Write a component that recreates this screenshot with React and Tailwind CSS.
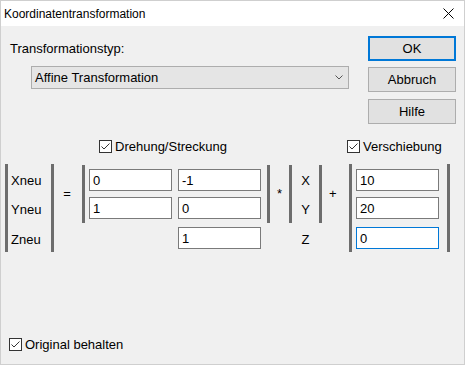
import React from "react";

// Dialog "Koordinatentransformation" im Windows-Stil

const Bar = ({ tall = false }) => (
  <div className={`w-[3px] bg-[#6d6d6d] ${tall ? "h-[88px]" : "h-[58px] mt-[1px]"}`}></div>
);

const Field = ({ value = "", focus = false }) => (
  <div
    className={`w-[83px] h-[22px] bg-white border pl-[3px] flex items-center text-[13px] leading-[15px] ${
      focus ? "border-[#0078d7]" : "border-[#7a7a7a]"
    }`}
  >
    {value}
  </div>
);

const Check = ({ label }) => (
  <div className="flex items-center gap-[3px] h-[13px]">
    <div className="w-[13px] h-[13px] border border-[#333333] bg-white flex items-center justify-center">
      <svg width="11" height="11" viewBox="0 0 11 11">
        <path d="M1.5 5.5 L4 8 L9.5 2.5" fill="none" stroke="#333333" strokeWidth="1" />
      </svg>
    </div>
    <span className="text-[13px] leading-[15px]">{label}</span>
  </div>
);

const Button = ({ title, primary = false }) => (
  <div
    className={`w-[88px] h-[25px] bg-[#e1e1e1] flex items-center justify-center text-[13px] ${
      primary ? "border-2 border-[#0078d7]" : "border border-[#adadad]"
    }`}
  >
    {title}
  </div>
);

const App = () => {
  return (
    <div
      className="w-[465px] h-[365px] flex flex-col bg-[#f0f0f0] border border-[#cfcfcf] text-black"
      style={{ fontFamily: '"Liberation Sans", Arial, sans-serif' }}
    >
      {/* Titelleiste */}
      <div className="h-[25px] bg-white flex items-center justify-between pl-[3px] pr-[10px]">
        <span className="text-[12px] leading-[14px]">Koordinatentransformation</span>
        <svg width="11" height="11" viewBox="0 0 11 11">
          <path d="M0.5 0.5 L10.5 10.5 M10.5 0.5 L0.5 10.5" stroke="#000" strokeWidth="1" />
        </svg>
      </div>

      {/* Oberer Bereich */}
      <div className="flex pt-[10px] pl-[9px] pr-[8px]">
        <div className="flex-1 flex flex-col">
          <p className="mt-[5px] text-[13px] leading-[15px]">Transformationstyp:</p>
          <div className="mt-[10px] ml-[21px] w-[318px] h-[23px] bg-[#e5e5e5] border border-[#adadad] flex items-center justify-between pl-[3px] pr-[5px] text-[13px]">
            <span>Affine Transformation</span>
            <svg width="8" height="5" viewBox="0 0 8 5">
              <path d="M0.5 0.5 L4 4 L7.5 0.5" fill="none" stroke="#555" strokeWidth="1" />
            </svg>
          </div>
        </div>
        <div className="flex flex-col">
          <Button title="OK" primary={true} />
          <div className="mt-[6px]">
            <Button title="Abbruch" />
          </div>
          <div className="mt-[7px]">
            <Button title="Hilfe" />
          </div>
        </div>
      </div>

      {/* Checkboxen */}
      <div className="flex mt-[16px] pl-[98px]">
        <div className="w-[248px]">
          <Check label="Drehung/Streckung" />
        </div>
        <Check label="Verschiebung" />
      </div>

      {/* Matrix */}
      <div className="flex items-start mt-[11px] pl-[4px] text-[13px] leading-[15px]">
        <Bar tall={true} />
        <div className="w-[43px] pl-[3px] flex flex-col">
          <div className="h-[22px] mt-[5px] flex items-center">Xneu</div>
          <div className="h-[22px] mt-[7px] flex items-center">Yneu</div>
          <div className="h-[22px] mt-[8px] flex items-center">Zneu</div>
        </div>
        <Bar tall={true} />
        <div className="w-[28px] h-[58px] flex items-center justify-center pr-[2px]">=</div>
        <Bar />
        <div className="flex flex-col ml-[4px] mt-[5px]">
          <div className="flex gap-[6px]">
            <Field value="0" />
            <Field value="-1" />
          </div>
          <div className="flex gap-[6px] mt-[6px]">
            <Field value="1" />
            <Field value="0" />
          </div>
          <div className="flex gap-[6px] mt-[8px]">
            <div className="w-[83px]"></div>
            <Field value="1" />
          </div>
        </div>
        <div className="w-[6px]"></div>
        <Bar />
        <div className="w-[19px] h-[58px] flex items-center justify-center">*</div>
        <Bar />
        <div className="w-[27px] flex flex-col items-center">
          <div className="h-[22px] mt-[5px] flex items-center">X</div>
          <div className="h-[22px] mt-[7px] flex items-center">Y</div>
          <div className="h-[22px] mt-[8px] flex items-center">Z</div>
        </div>
        <Bar />
        <div className="w-[27px] h-[58px] flex items-center pl-[7px]">+</div>
        <Bar tall={true} />
        <div className="flex flex-col ml-[4px] mt-[5px]">
          <Field value="10" />
          <div className="mt-[6px]">
            <Field value="20" />
          </div>
          <div className="mt-[8px]">
            <Field value="0" focus={true} />
          </div>
        </div>
        <div className="w-[8px]"></div>
        <Bar tall={true} />
      </div>

      {/* Unten */}
      <div className="mt-[86px] pl-[8px]">
        <Check label="Original behalten" />
      </div>
    </div>
  );
};

export default App;
